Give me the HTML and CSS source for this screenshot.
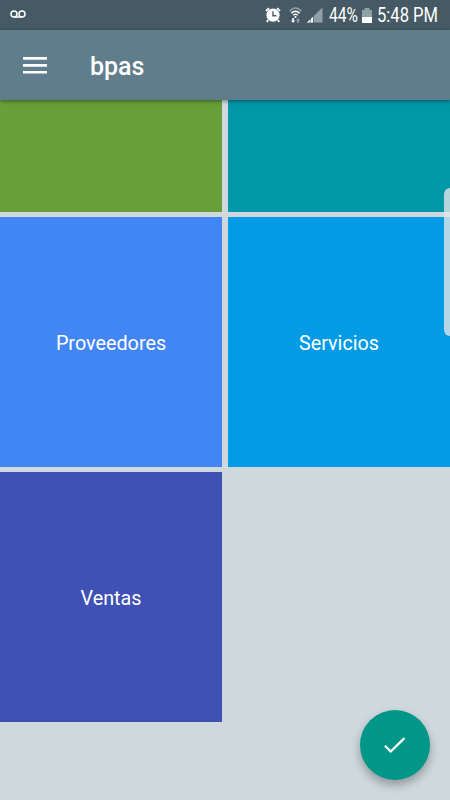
FILE: index.html
```html
<!DOCTYPE html>
<html lang="es">
<head>
    <meta charset="UTF-8">
    <meta name="viewport" content="width=device-width, initial-scale=1.0">
    <title>bpas</title>
    <link rel="stylesheet" href="styles.css">
</head>
<body>
    <div class="status-bar">
        <svg class="voicemail" width="16" height="9" viewBox="0 0 16 9">
            <circle cx="4" cy="4" r="3"/>
            <circle cx="12" cy="4" r="3"/>
            <path d="M4 7h8"/>
        </svg>
        <div class="status-icons">
            <svg class="alarm" width="16" height="16" viewBox="0 0 16 16">
                <path d="M1 4l3-2.8M15 4l-3-2.8M3.2 13.2l-1.5 1.6M12.8 13.2l1.5 1.6" stroke="#fff" stroke-width="1.8"/>
                <circle cx="8" cy="8.2" r="6.6" fill="#fff"/>
                <path d="M8 4.3v4.4h3.4" fill="none" stroke="#455a64" stroke-width="1.4"/>
            </svg>
            <svg class="wifi" width="13" height="17" viewBox="0 0 13 17">
                <path d="M.8 4.2C4-.1 9-.1 12.2 4.2" fill="none" stroke="#90a0a7" stroke-width="1.6"/>
                <path d="M2.5 6.3c2.2-2.8 5.8-2.8 8 0M4.3 8.3c1.3-1.5 3.1-1.5 4.4 0" fill="none" stroke="#fff" stroke-width="1.5"/>
                <circle cx="6.5" cy="10" r="1.1" fill="#fff"/>
                <path d="M3.3 11h1.6v2.5h1.4L4.1 16l-2.2-2.5h1.4z" fill="#fff"/>
                <path d="M8.2 16v-2.5H6.8L9 11l2.2 2.5H9.8V16z" fill="#90a0a7"/>
            </svg>
            <svg class="signal" width="16" height="16" viewBox="0 0 16 16">
                <path d="M0 15.5L15.5.5v15z" fill="#90a0a7"/>
                <path d="M0 15.5L6 9.7v5.8z" fill="#fff"/>
                <path d="M3.3 11v5M6.4 8v8" stroke="#455a64" stroke-width=".7"/>
            </svg>
            <svg class="percent" width="31" height="30">
                <text x="1" y="22" textLength="29" lengthAdjust="spacingAndGlyphs">44%</text>
            </svg>
            <svg class="battery" width="10" height="15" viewBox="0 0 10 15">
                <path d="M0 2h2.5V0h5v2H10v7H0z" fill="#90a0a7"/>
                <path d="M0 9h10v6H0z" fill="#fff"/>
            </svg>
            <svg class="clock" width="64" height="30">
                <text x="1" y="22" textLength="61" lengthAdjust="spacingAndGlyphs">5:48 PM</text>
            </svg>
        </div>
    </div>

    <div class="toolbar">
        <svg class="menu" width="24" height="17" viewBox="0 0 24 17">
            <path d="M0 1.4h24M0 8.4h24M0 15.2h24" stroke="#fff" stroke-width="2.6"/>
        </svg>
        <h1>bpas</h1>
    </div>

    <div class="grid">
        <div class="tile green"></div>
        <div class="tile cyan"></div>
        <div class="tile blue">Proveedores</div>
        <div class="tile light-blue">Servicios</div>
        <div class="tile indigo">Ventas</div>
    </div>

    <div class="edge-handle"></div>

    <button class="fab" aria-label="OK">
        <svg width="22" height="17" viewBox="0 0 22 17">
            <path d="M1 8.8l5.7 5.7L20.4 1.2" fill="none" stroke="#fff" stroke-width="2.3"/>
        </svg>
    </button>
</body>
</html>
```

FILE: styles.css
```css
* {
    box-sizing: border-box;
}
body {
    margin: 0;
    height: 800px;
    overflow: hidden;
    position: relative;
    background-color: #cfd8dd;
    color: #ffffff;
    font-family: Roboto, sans-serif;
}
.status-bar {
    height: 30px;
    padding: 0 10px;
    display: flex;
    justify-content: space-between;
    align-items: center;
    background-color: #455a64;
}
.voicemail {
    margin-bottom: 1px;
    fill: none;
    stroke: #ffffff;
    stroke-width: 1.5;
}
.status-icons {
    display: flex;
    align-items: center;
}
.status-icons svg {
    overflow: visible;
}
.status-icons text {
    font-size: 19.5px;
    fill: #ffffff;
}
.wifi {
    margin-left: 8px;
}
.signal {
    margin-left: 5px;
}
.percent {
    margin-left: 5px;
}
.battery {
    margin-left: 3px;
}
.clock {
    margin-left: 4px;
}
.toolbar {
    position: relative;
    z-index: 1;
    height: 70px;
    padding-left: 23px;
    display: flex;
    align-items: center;
    background-color: #607d8b;
    box-shadow: 0 1px 4px rgba(0, 0, 0, 0.45);
}
.toolbar h1 {
    margin: 2px 0 0 43px;
    font-size: 25px;
    font-weight: 500;
}
.grid {
    display: grid;
    grid-template-columns: 222px 222px;
    grid-template-rows: 112px 250px 250px;
    gap: 5px 6px;
}
.tile {
    padding-top: 3px;
    display: flex;
    justify-content: center;
    align-items: center;
    font-size: 19.8px;
}
.green {
    background-color: #689f38;
}
.cyan {
    background-color: #0097a7;
}
.blue {
    background-color: #4285f4;
}
.light-blue {
    background-color: #039be5;
}
.indigo {
    background-color: #3f51b5;
}
.edge-handle {
    position: absolute;
    top: 188px;
    right: 0;
    width: 6px;
    height: 148px;
    border-radius: 6px 0 0 6px;
    background-color: rgba(225, 230, 233, 0.8);
}
.fab {
    position: absolute;
    right: 20px;
    bottom: 20px;
    width: 70px;
    height: 70px;
    padding: 0;
    border: none;
    border-radius: 50%;
    display: flex;
    justify-content: center;
    align-items: center;
    background-color: #009688;
    box-shadow: 0 5px 10px rgba(0, 0, 0, 0.3);
}
```
